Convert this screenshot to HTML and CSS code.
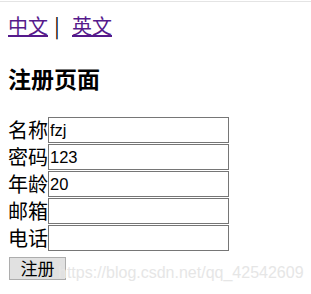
FILE: index.html
```html
<!DOCTYPE html>
<html lang="zh-CN">
<head>
    <meta charset="UTF-8">
    <meta name="viewport" content="width=device-width, initial-scale=1.0">
    <title>注册页面</title>
    <link rel="stylesheet" href="styles.css">
</head>
<body>
    <div class="idioma">
        <a href="#">中文</a><span class="barra">|</span><a href="#">英文</a>
    </div>

    <h3 class="titulo">注册页面</h3>

    <form class="cadastro">
        <div class="linha">
            <label for="nome">名称</label>
            <input class="campo" type="text" id="nome" value="fzj">
        </div>
        <div class="linha">
            <label for="senha">密码</label>
            <input class="campo" type="text" id="senha" value="123">
        </div>
        <div class="linha">
            <label for="idade">年龄</label>
            <input class="campo" type="text" id="idade" value="20">
        </div>
        <div class="linha">
            <label for="email">邮箱</label>
            <input class="campo" type="text" id="email">
        </div>
        <div class="linha">
            <label for="tel">电话</label>
            <input class="campo" type="text" id="tel">
        </div>
        <button class="botao" type="button">注册</button>
    </form>

    <div class="marca">https://blog.csdn.net/qq_42542609</div>
</body>
</html>
```

FILE: styles.css
```css
body {
    margin: 1px 0 0;
    padding: 0 8px;
    border-top: 1px solid #e4e4e4;
    font-family: "Noto Sans CJK SC", "Liberation Sans", sans-serif;
    font-size: 20px;
    color: #000000;
    position: relative;
    min-height: 290px;
}

.idioma {
    margin-top: 10px;
    height: 28px;
    line-height: 28px;
    display: flex;
    align-items: center;
}

.idioma a {
    color: #551a8b;
    text-decoration: underline;
}

.barra {
    display: inline-block;
    width: 16px;
    margin-left: 1px;
    margin-right: 7px;
    text-align: center;
}

.titulo {
    margin: 24px 0 25px;
    font-size: 23px;
    line-height: 28px;
    font-weight: bold;
}

.cadastro {
    margin: 0;
}

.linha {
    display: flex;
    align-items: flex-start;
    height: 27px;
}

.linha label {
    width: 40px;
    height: 26px;
    line-height: 26px;
    white-space: nowrap;
}

.campo {
    box-sizing: border-box;
    width: 181px;
    height: 26px;
    margin: 0;
    padding: 0 1px;
    border: 1px solid #767676;
    font-family: "Liberation Sans", Arial, sans-serif;
    font-size: 16.5px;
    color: #000000;
    background: #ffffff;
}

.botao {
    box-sizing: border-box;
    margin: 1px 0 0 1px;
    width: 57px;
    height: 23px;
    padding: 0;
    border: 1px solid #adadad;
    background-color: #e1e1e1;
    font-family: "Noto Sans CJK SC", sans-serif;
    font-size: 17px;
    line-height: 20px;
    color: #000000;
}

/* marca d'agua do print */
.marca {
    position: absolute;
    left: 58px;
    top: 262px;
    font-family: "Liberation Sans", Arial, sans-serif;
    font-size: 16px;
    line-height: 18px;
    color: #e6e6e6;
    pointer-events: none;
}
```
